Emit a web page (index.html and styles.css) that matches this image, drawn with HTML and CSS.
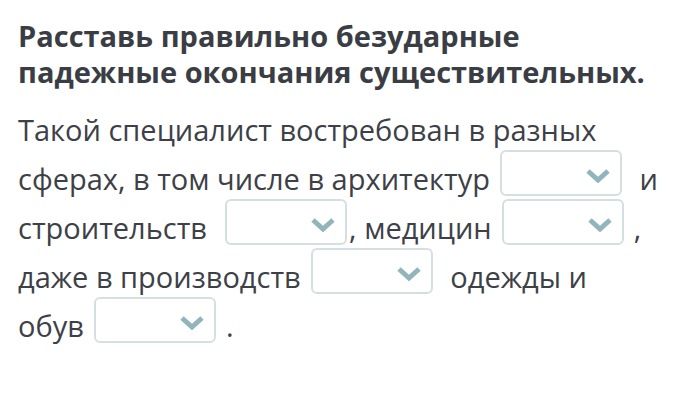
FILE: index.html
```html
<!DOCTYPE html>
<html lang="ru">
<head>
<meta charset="utf-8">
<link rel="stylesheet" href="styles.css">
</head>
<body>
<main class="task">
  <h1 class="title">Расставь правильно безударные падежные окончания существительных.</h1>
  <p class="text">Такой специалист востребован в разных сферах, в том числе в <span class="blank">архитектур <span class="sel"><svg class="chev" viewBox="0 0 26 15" width="26" height="15"><polyline points="3,3 13,12 23,3"/></svg></span></span>&nbsp; и <span class="blank">строительств&nbsp; <span class="sel"><svg class="chev" viewBox="0 0 26 15" width="26" height="15"><polyline points="3,3 13,12 23,3"/></svg></span>,</span> <span class="blank">медицин <span class="sel"><svg class="chev" viewBox="0 0 26 15" width="26" height="15"><polyline points="3,3 13,12 23,3"/></svg></span></span> , даже в <span class="blank">производств <span class="sel"><svg class="chev" viewBox="0 0 26 15" width="26" height="15"><polyline points="3,3 13,12 23,3"/></svg></span></span>&nbsp; одежды и <span class="blank">обув <span class="sel"><svg class="chev" viewBox="0 0 26 15" width="26" height="15"><polyline points="3,3 13,12 23,3"/></svg></span></span> .</p>
</main>
</body>
</html>
```

FILE: styles.css
```css
html, body {
  margin: 0;
  background: #ffffff;
}
.task {
  padding: 18px 18px 0 18px;
  width: 650px;
  font-family: "Open Sans", "Noto Sans", sans-serif;
  color: #3d4147;
}
.title {
  margin: 0;
  font-size: 29px;
  line-height: 36px;
  font-weight: 700;
  color: #3a3e44;
}
.text {
  margin: 15px 0 0 0;
  font-size: 29px;
  line-height: 49px;
  font-weight: 400;
}
.blank {
  white-space: nowrap;
}
.sel {
  display: inline-block;
  box-sizing: border-box;
  width: 122px;
  height: 46px;
  border: 2px solid #d5dfe2;
  border-radius: 6px;
  background: #fff;
  overflow: hidden;
  vertical-align: -6px;
  margin: -5px 2px 0 3px;
}
.chev {
  display: block;
  margin: 16px 0 0 83px;
  fill: none;
  stroke: #92b5bc;
  stroke-width: 5;
  stroke-linecap: butt;
}
```
